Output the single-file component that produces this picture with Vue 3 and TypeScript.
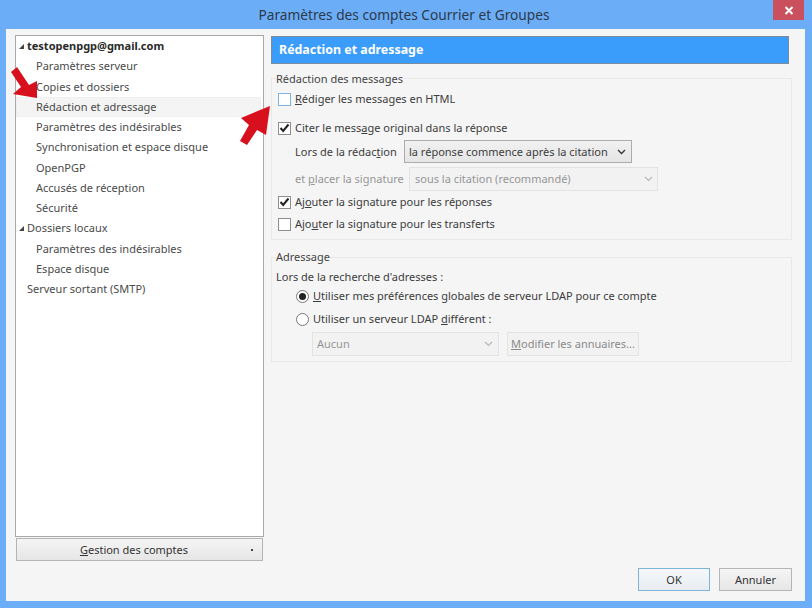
<script setup lang="ts">
interface Row { label: string; level: number; bold?: boolean; twisty?: boolean; selected?: boolean }
const rows: Row[] = [
  { label: 'testopenpgp@gmail.com', level: 0, bold: true, twisty: true },
  { label: 'Paramètres serveur', level: 1 },
  { label: 'Copies et dossiers', level: 1 },
  { label: 'Rédaction et adressage', level: 1, selected: true },
  { label: 'Paramètres des indésirables', level: 1 },
  { label: 'Synchronisation et espace disque', level: 1 },
  { label: 'OpenPGP', level: 1 },
  { label: 'Accusés de réception', level: 1 },
  { label: 'Sécurité', level: 1 },
  { label: 'Dossiers locaux', level: 0, twisty: true },
  { label: 'Paramètres des indésirables', level: 1 },
  { label: 'Espace disque', level: 1 },
  { label: 'Serveur sortant (SMTP)', level: 0 }
]
</script>

<template>
  <div class="window">
    <header class="titlebar">
      <span class="title">Paramètres des comptes Courrier et Groupes</span>
      <button class="close" aria-label="Fermer">
        <svg width="10" height="9" viewBox="0 0 10 9"><path d="M1.5 1 8.5 8M8.5 1 1.5 8" stroke="#fff" stroke-width="2" fill="none" /></svg>
      </button>
    </header>
    <div class="client">
      <aside class="side">
        <ul class="tree">
          <li v-for="r in rows" :key="r.label + r.level + r.twisty" class="row" :class="{ sel: r.selected, lv1: r.level === 1, bold: r.bold }">
            <svg v-if="r.twisty" class="twisty" width="5" height="5" viewBox="0 0 5 5"><path d="M5 0V5H0Z" fill="#444" /></svg>
            <span>{{ r.label }}</span>
          </li>
        </ul>
        <button class="btn manage">
          <span><u>G</u>estion des comptes</span>
          <i class="dot"></i>
        </button>
      </aside>
      <main class="panel">
        <div class="banner">Rédaction et adressage</div>
        <fieldset class="group first">
          <legend>Rédaction des messages</legend>
          <label class="check r1"><span class="box hover"></span><span><u>R</u>édiger les messages en HTML</span></label>
          <label class="check r2"><span class="box"><svg width="11" height="10" viewBox="0 0 11 10"><path d="M1.5 5 4.2 8 9.5 1.5" stroke="#222" stroke-width="2" fill="none" /></svg></span><span>Citer le mess<u>a</u>ge original dans la réponse</span></label>
          <div class="line r3"><span class="lbl">Lors de la rédac<u>t</u>ion</span>
            <div class="select sel-a"><span>la réponse commence après la citation</span><svg width="9" height="6" viewBox="0 0 9 6"><path d="M1 1 4.5 4.5 8 1" stroke="#333" stroke-width="1.3" fill="none" /></svg></div>
          </div>
          <div class="line r4 off"><span class="lbl"><span>et <u>p</u>lacer la signature</span></span>
            <div class="select sel-b"><span>sous la citation (recommandé)</span><svg width="9" height="6" viewBox="0 0 9 6"><path d="M1 1 4.5 4.5 8 1" stroke="#b5b5b5" stroke-width="1.1" fill="none" /></svg></div>
          </div>
          <label class="check r5"><span class="box"><svg width="11" height="10" viewBox="0 0 11 10"><path d="M1.5 5 4.2 8 9.5 1.5" stroke="#222" stroke-width="2" fill="none" /></svg></span><span>Aj<u>o</u>uter la signature pour les réponses</span></label>
          <label class="check r6"><span class="box"></span><span>Ajo<u>u</u>ter la signature pour les transferts</span></label>
        </fieldset>
        <fieldset class="group second">
          <legend>Adressage</legend>
          <div class="lookup">Lors de la recherche d'adresses :</div>
          <label class="radio q1"><span class="disc on"></span><span><u>U</u>tiliser mes préférences globales de serveur LDAP pour ce compte</span></label>
          <label class="radio q2"><span class="disc"></span><span>Utiliser un serveur LDAP <u>d</u>ifférent :</span></label>
          <div class="ldap off">
            <div class="select sel-c"><span>Aucun</span><svg width="9" height="6" viewBox="0 0 9 6"><path d="M1 1 4.5 4.5 8 1" stroke="#b5b5b5" stroke-width="1.1" fill="none" /></svg></div>
            <div class="btn edit"><span><u>M</u>odifier les annuaires...</span></div>
          </div>
        </fieldset>
        <div class="actions">
          <button class="btn ok">OK</button>
          <button class="btn cancel">Annuler</button>
        </div>
      </main>
      <svg class="arrows" width="812" height="608" viewBox="0 0 812 608">
        <path d="M11 72 17 67 29 85 37 81 37 98 13 94 21 87Z" fill="#d8101e" />
        <path d="M270 106 266 135 257 130 247 145 240 141 249 125 241 118Z" fill="#d8101e" />
      </svg>
    </div>
  </div>
</template>

<style>
html, body { margin: 0; padding: 0; }
</style>

<style scoped>
.window {
  width: 812px; height: 608px; box-sizing: border-box; overflow: hidden;
  display: flex; flex-direction: column;
  background: #6badf7; padding: 0 7px 7px 6px;
  font: 11px/16px "Noto Sans", "Open Sans", sans-serif; color: #333;
}
.titlebar { height: 29px; flex: none; display: flex; align-items: center; justify-content: center; position: relative; }
.title { font-size: 13.7px; color: #2d3a4a; margin: 1px 3px 0 0; }
.close {
  position: absolute; right: 1px; top: 0; width: 31px; height: 20px; padding: 0; border: 0;
  background: #c9505c; display: flex; align-items: center; justify-content: center;
}
.client { flex: 1; display: flex; gap: 7px; background: #f5f5f5; padding: 6px 13px 7px 9px; min-height: 0; position: relative; }
.arrows { position: absolute; left: -6px; top: -29px; pointer-events: none; }
.side { width: 249px; flex: none; display: flex; flex-direction: column; padding-bottom: 33px; }
.tree {
  flex: 1; margin: 0; padding: 0; list-style: none; background: #fff;
  border: 1px solid #a9a9a9; box-sizing: border-box;
}
.row { height: 20.25px; display: flex; align-items: center; padding-left: 11px; position: relative; color: #4a4a4a; }
.row.lv1 { padding-left: 20px; }
.row.bold { font-weight: 700; color: #2a2a2a; }
.row.sel { background: #f4f4f4; box-shadow: inset 0 0 0 1px #efefef; margin-right: 2px; }
.twisty { position: absolute; left: 3px; top: 8px; }
.btn {
  box-sizing: border-box; font: inherit; color: #333; background: linear-gradient(#f5f5f5, #e6e6e6);
  border: 1px solid #b5b5b5; padding: 0; display: flex; align-items: center; justify-content: center;
}
.manage { height: 23px; margin: 1px 1px 0; padding-right: 11px; position: relative; flex: none; }
.dot { position: absolute; right: 9px; top: 10px; width: 2px; height: 2px; background: #444; }
.panel { flex: 1; display: flex; flex-direction: column; min-width: 0; padding-bottom: 3px; }
.banner {
  height: 28px; flex: none; box-sizing: border-box; margin: 1px 3px 0 0; padding: 0 7px;
  display: flex; align-items: center; background: #3a9cfb; border: 1px solid #7b8c9e;
  color: #fff; font-weight: 700; font-size: 12.4px;
}
.group { margin: 6px 0 0; padding: 0 0 0 8px; border: 1px solid #e9e9e9; min-width: 0; position: relative; flex: none; box-sizing: border-box; }
.group legend { padding: 0; margin-left: -4px; line-height: 16px; color: #444; }
.first legend { position: relative; top: 1px; }
.first { height: 170px; }
.second { height: 113px; margin-top: 9px; }
.check, .radio, .line { display: flex; align-items: center; height: 20px; position: absolute; left: 6px; white-space: nowrap; color: #3c3c3c; }
.box {
  width: 11px; height: 11px; box-sizing: content-box; border: 1px solid #8e8e8e; background: #fff;
  margin-right: 4px; display: flex; align-items: center; justify-content: center; flex: none;
}
.box.hover { border-color: #7fb4de; }
.r1 { top: 3px; } .r2 { top: 32px; } .r3 { top: 54px; left: 23px; height: 23px; }
.r4 { top: 81px; left: 23px; height: 24px; } .r5 { top: 106px; } .r6 { top: 128px; }
.lbl { width: 108px; flex: none; white-space: nowrap; }
.select {
  box-sizing: border-box; display: flex; align-items: center; justify-content: space-between;
  border: 1px solid #acacac; background: linear-gradient(#f1f1f1, #e5e5e5); padding: 0 5px 0 4px; height: 100%;
}
.sel-a { width: 228px; margin-left: 1px; }
.sel-b { width: 249px; margin-left: 6px; padding-left: 5px; padding-right: 4px; background: #f2f2f2; border-color: #e3e3e3; }
.r4.off, .off { color: #969696; }
.lookup { position: absolute; left: 4px; top: 4px; color: #3c3c3c; }
.disc {
  width: 11px; height: 11px; border: 1px solid #777; border-radius: 50%; background: #fff; margin-right: 4px;
  display: flex; align-items: center; justify-content: center; flex: none;
}
.disc.on::after { content: ""; width: 7px; height: 7px; border-radius: 50%; background: #222; }
.q1 { top: 21px; left: 24px; } .q2 { top: 44px; left: 24px; }
.ldap { position: absolute; left: 40px; top: 67px; display: flex; gap: 8px; height: 24px; }
.sel-c { width: 187px; background: #f2f2f2; border-color: #e3e3e3; padding-left: 4px; }
.edit { width: 132px; color: #8a8a8a; background: #f2f2f2; border-color: #e3e3e3; white-space: nowrap; }
.actions { margin-top: auto; display: flex; justify-content: flex-end; gap: 9px; padding-right: 0; }
.ok, .cancel { width: 72px; height: 23px; }
.ok { border-color: #7fb3d8; background: linear-gradient(#f4f8fb, #e8edf1); }
.cancel { width: 73px; }
</style>
